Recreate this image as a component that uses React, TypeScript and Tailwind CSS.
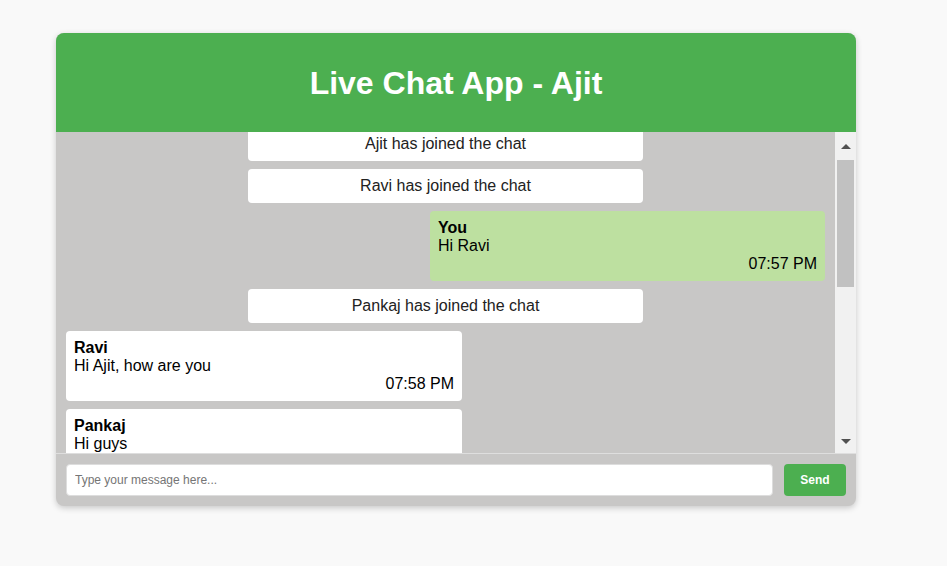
import React from "react";

interface Msg {
  kind: "system" | "mine" | "other";
  user?: string;
  text: string;
  time?: string;
}

const messages: Msg[] = [
  { kind: "system", text: "Ajit has joined the chat" },
  { kind: "system", text: "Ravi has joined the chat" },
  { kind: "mine", user: "You", text: "Hi Ravi", time: "07:57 PM" },
  { kind: "system", text: "Pankaj has joined the chat" },
  { kind: "other", user: "Ravi", text: "Hi Ajit, how are you", time: "07:58 PM" },
  { kind: "other", user: "Pankaj", text: "Hi guys", time: "07:58 PM" },
];

export default function App() {
  return (
    <div
      className="min-h-[566px] w-full bg-[#f9f9f9] pt-[33px] pl-[56px]"
      style={{ fontFamily: '"Liberation Sans", Arial, sans-serif' }}
    >
      <div className="w-[800px] rounded-lg overflow-hidden bg-[#c8c7c6] shadow-[0_2px_6px_rgba(0,0,0,0.2)]">
        {/* Header */}
        <div className="h-[99px] bg-[#4caf50] flex items-center justify-center">
          <h1 className="text-[32px] font-bold text-white leading-none">Live Chat App - Ajit</h1>
        </div>

        {/* Messages */}
        <div className="h-[321px] flex overflow-hidden">
          <div className="flex-1 overflow-hidden px-[10px]">
            <div className="flex flex-col gap-2 -mt-[5px]">
              {messages.map((m, i) =>
                m.kind === "system" ? (
                  <div
                    key={i}
                    className="w-[395px] mx-auto bg-white rounded-[4px] py-2 text-center text-[16px] leading-[18px] text-[#222]"
                  >
                    {m.text}
                  </div>
                ) : (
                  <div
                    key={i}
                    className={
                      "rounded-[4px] p-2 text-[16px] leading-[18px] text-black " +
                      (m.kind === "mine" ? "w-[395px] self-end bg-[#bde0a0]" : "w-[396px] self-start bg-white")
                    }
                  >
                    <div className="font-bold">{m.user}</div>
                    <div>{m.text}</div>
                    <div className="text-right">{m.time}</div>
                  </div>
                )
              )}
            </div>
          </div>
          {/* Scrollbar */}
          <div className="w-[21px] bg-[#f1f1f1] flex flex-col items-center">
            <div className="h-[28px] flex items-center justify-center">
              <div className="w-0 h-0 border-l-[5px] border-r-[5px] border-b-[5px] border-l-transparent border-r-transparent border-b-[#505050]" />
            </div>
            <div className="w-[17px] h-[127px] bg-[#c1c1c1]" />
            <div className="flex-1" />
            <div className="h-[24px] flex items-center justify-center">
              <div className="w-0 h-0 border-l-[5px] border-r-[5px] border-t-[5px] border-l-transparent border-r-transparent border-t-[#505050]" />
            </div>
          </div>
        </div>

        {/* Input */}
        <div className="border-t border-[#dedede] flex items-center gap-[11px] px-[10px] pt-[10px] pb-[10px]">
          <input
            type="text"
            placeholder="Type your message here..."
            className="flex-1 h-[32px] bg-white rounded-[4px] border border-[#ddd] px-2 text-[12px] outline-none placeholder:text-[#757575]"
            style={{ fontFamily: '"Liberation Sans", Arial, sans-serif' }}
          />
          <button className="w-[62px] h-[32px] bg-[#4caf50] text-white text-[12px] font-bold rounded-[4px]">
            Send
          </button>
        </div>
      </div>
    </div>
  );
}
